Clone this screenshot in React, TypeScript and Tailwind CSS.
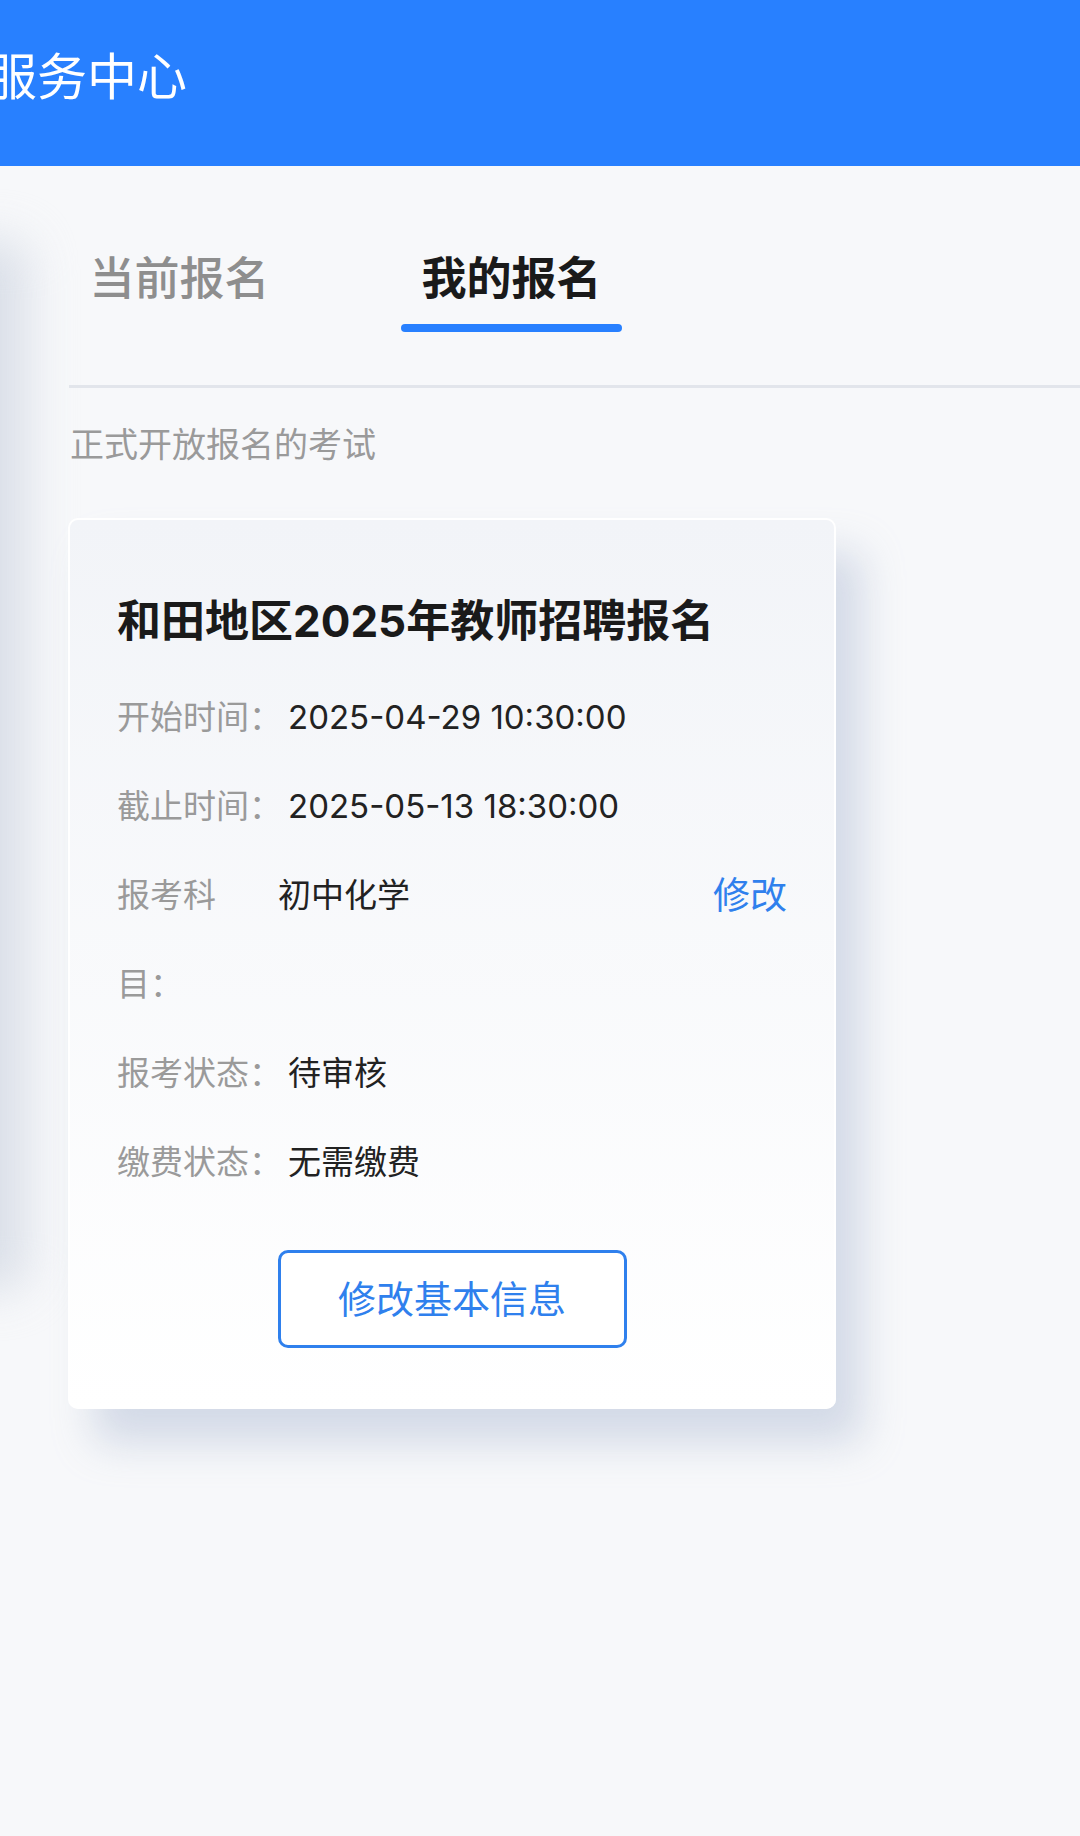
import React from 'react';

const rows: { label: string; value: string; action?: string }[] = [
  { label: '开始时间：', value: '2025-04-29 10:30:00' },
  { label: '截止时间：', value: '2025-05-13 18:30:00' },
  { label: '报考科目：', value: '初中化学', action: '修改' },
  { label: '报考状态：', value: '待审核' },
  { label: '缴费状态：', value: '无需缴费' },
];

function InfoRow({ label, value, action }: { label: string; value: string; action?: string }) {
  if (action) {
    return (
      <div className="flex items-start leading-[89px] text-[33px]">
        <span className="w-[114px] shrink-0 text-[#9A9A9A]">{label}</span>
        <span className="ml-[47px] flex-1 text-[#222]">{value}</span>
        <button className="text-[37px] text-[#2F80ED] leading-[89px]">{action}</button>
      </div>
    );
  }
  return (
    <div className="flex items-start leading-[89px] text-[33px]">
      <span className="shrink-0 text-[#9A9A9A]">{label}</span>
      <span className="ml-[6px] text-[#222]">{value}</span>
    </div>
  );
}

export default function App() {
  return (
    <div className="relative min-h-[1836px] overflow-hidden bg-[#F7F8FA] font-['Inter','Noto_Sans_CJK_SC',sans-serif]">
      {/* header */}
      <div className="flex h-[166px] items-center overflow-hidden bg-[#2880FF]">
        <span className="mb-[12px] ml-[-13px] whitespace-nowrap text-[50px] leading-none text-white">服务中心</span>
      </div>

      {/* shadow of previous page peeking in */}
      <div className="pointer-events-none absolute left-[-52px] top-[240px] h-[1050px] w-[80px] rounded-[20px] bg-[#D3D9E4] opacity-80 blur-[24px]" />

      <div className="relative ml-[69px]">
        {/* tabs */}
        <div className="flex gap-[111px] border-b-[3px] border-[#E2E5EB] pt-[90px]">
          <div className="flex w-[221px] flex-col items-center">
            <span className="text-[45px] font-medium leading-none text-[#8E8E8E]">当前报名</span>
            <div className="mt-[23px] h-[8px] w-full" />
            <div className="h-[53px]" />
          </div>
          <div className="flex w-[221px] flex-col items-center">
            <span className="text-[45px] font-bold leading-none text-[#1A1A1A]">我的报名</span>
            <div className="mt-[23px] h-[8px] w-full rounded-full bg-[#2880FF]" />
            <div className="h-[53px]" />
          </div>
        </div>

        <p className="ml-px mt-[40px] text-[34px] leading-none text-[#9A9A9A]">正式开放报名的考试</p>

        {/* card */}
        <div className="mt-[56px] ml-[-1px] w-[768px] rounded-[10px] border-2 border-white bg-gradient-to-b from-[#F2F4F8] to-white px-[47px] pb-[59px] pt-[79px] shadow-[26px_34px_40px_rgba(168,182,208,0.45)]">
          <h2 className="text-[44px] font-bold leading-none text-[#1A1A1A]">和田地区2025年教师招聘报名</h2>
          <div className="mt-[30px]">
            {rows.map((r) => (
              <InfoRow key={r.label} label={r.label} value={r.value} action={r.action} />
            ))}
          </div>
          <div className="mt-[43px] flex justify-center">
            <button className="flex h-[98px] w-[349px] items-center justify-center rounded-[10px] border-[3px] border-[#2F80ED] bg-white text-[38px] text-[#2F80ED]">
              修改基本信息
            </button>
          </div>
        </div>
      </div>
    </div>
  );
}
